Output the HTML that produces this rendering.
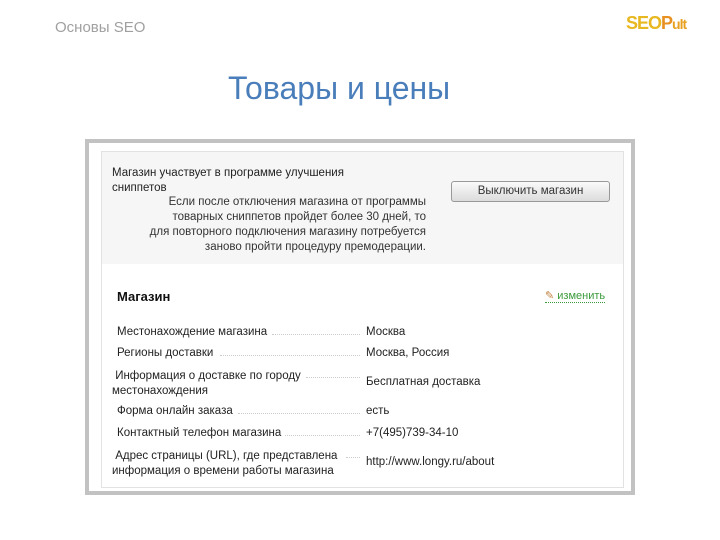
<!DOCTYPE html>
<html><head><meta charset="utf-8"><style>
*{margin:0;padding:0;box-sizing:border-box}
body{width:720px;height:540px;background:#fff;position:relative;overflow:hidden;font-family:"Liberation Sans","DejaVu Sans",sans-serif}
.a{position:absolute;white-space:nowrap}
.t{font-size:11.5px;color:#222}
.dot{position:absolute;border-top:1px dotted #ccc;height:0}
</style></head><body>
<div class="a" style="left:55px;top:19px;font-size:15px;color:#a0a0a0">Основы SEO</div>
<div class="a" style="left:626px;top:13px;font-size:18px;font-weight:bold;color:#e8b820;letter-spacing:-1px">SEO<span style="color:#e89020">P</span><span style="font-size:14px;color:#e8a020">ult</span></div>
<div class="a" style="left:228px;top:70px;font-size:32px;color:#4a7ebb">Товары и цены</div>

<div class="a" style="left:85px;top:139px;width:550px;height:356px;border:4px solid #c2c2c2;background:#fff"></div>
<div class="a" style="left:101px;top:151px;width:523px;height:337px;border:1px solid #e2e2e2;background:#fff"></div>
<div class="a" style="left:102px;top:152px;width:521px;height:112px;background:#f6f6f6"></div>

<div class="a t" style="left:112px;top:166px;line-height:15px">Магазин участвует в программе улучшения<br>сниппетов</div>
<div class="a t" style="left:126px;top:195px;width:300px;text-align:right;line-height:15px;color:#333">Если после отключения магазина от программы<br>товарных сниппетов пройдет более 30 дней, то<br>для повторного подключения магазину потребуется<br>заново пройти процедуру премодерации.</div>
<div class="a" style="left:451px;top:181px;width:159px;height:21px;border:1px solid #999;border-radius:3px;background:linear-gradient(#fafafa,#dcdcdc);font-size:11.5px;color:#333;text-align:center;line-height:19px">Выключить магазин</div>

<div class="a" style="left:117px;top:289px;font-size:13px;font-weight:bold;color:#111">Магазин</div>
<div class="a" style="left:545px;top:289px;font-size:11px;color:#3a9a3a;border-bottom:1px dotted #3a9a3a"><span style="color:#c08040">✎</span> изменить</div>

<div class="a t" style="left:117px;top:326px">Местонахождение магазина</div>
<div class="dot" style="left:272px;top:334px;width:88px"></div>
<div class="a t" style="left:366px;top:326px">Москва</div>
<div class="a t" style="left:117px;top:347px">Регионы доставки</div>
<div class="dot" style="left:220px;top:355px;width:140px"></div>
<div class="a t" style="left:366px;top:347px">Москва, Россия</div>
<div class="a t" style="left:112px;top:369px;line-height:15px">&nbsp;Информация о доставке по городу<br>местонахождения</div>
<div class="dot" style="left:306px;top:377px;width:54px"></div>
<div class="a t" style="left:366px;top:376px">Бесплатная доставка</div>
<div class="a t" style="left:117px;top:405px">Форма онлайн заказа</div>
<div class="dot" style="left:238px;top:413px;width:122px"></div>
<div class="a t" style="left:366px;top:405px">есть</div>
<div class="a t" style="left:117px;top:427px">Контактный телефон магазина</div>
<div class="dot" style="left:285px;top:435px;width:75px"></div>
<div class="a t" style="left:366px;top:427px">+7(495)739-34-10</div>
<div class="a t" style="left:112px;top:449px;line-height:15px">&nbsp;Адрес страницы (URL), где представлена<br>информация о времени работы магазина</div>
<div class="dot" style="left:346px;top:457px;width:14px"></div>
<div class="a t" style="left:366px;top:456px">http://www.longy.ru/about</div>
</body></html>
